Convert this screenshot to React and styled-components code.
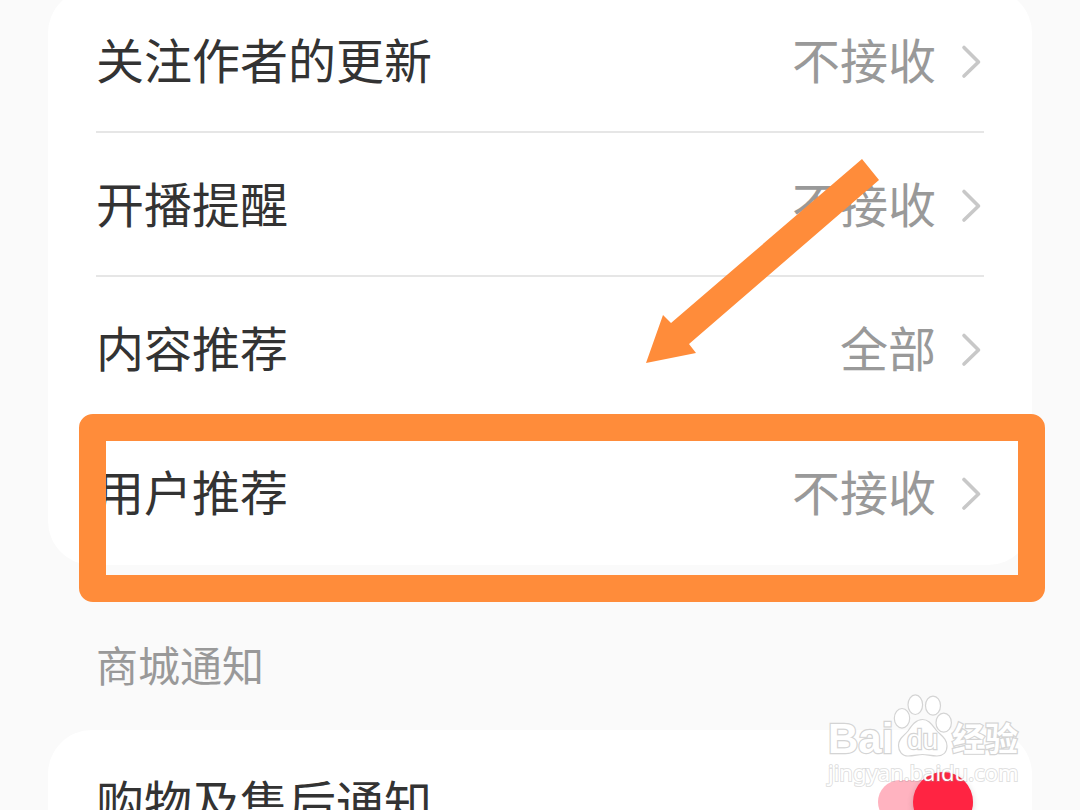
import React, {useState} from 'react';
import styled, {createGlobalStyle} from 'styled-components';

const MARK_COLOR = '#ff8c3a';
const FONT = "'Noto Sans CJK SC', sans-serif";

const GlobalStyle = createGlobalStyle`
	* {
		box-sizing: border-box;
	}
	body {
		margin: 0;
		background: #fafafa;
		font-family: ${FONT};
	}
`;

const Page = styled.main`
	position: relative;
	height: 100vh;
	overflow: hidden;
	padding: 0 48px;
	background: #fafafa;
`;

const Card = styled.section`
	margin-top: ${(props) => (props.$scrolled ? '-11px' : '0')};
	padding: 0 48px;
	border-radius: 44px;
	background: #ffffff;
`;

const Row = styled.div`
	position: relative;
	height: 144px;
	border-bottom: 2px solid ${(props) => (props.$last ? 'transparent' : '#e6e6e6')};
`;

const RowButton = styled.button`
	display: flex;
	align-items: center;
	width: 100%;
	height: 100%;
	padding: 0 0 4px;
	border: 0;
	background: none;
	font-family: inherit;
	font-size: 48px;
	line-height: 72px;
	text-align: left;
	cursor: pointer;
`;

const RowLabel = styled.label`
	display: flex;
	align-items: center;
	justify-content: space-between;
	height: 100%;
	padding: 0 11px 2px 0;
	font-size: 48px;
	line-height: 72px;
	color: #333333;
`;

const Title = styled.span`
	flex: 1;
	color: #333333;
`;

const Value = styled.span`
	color: #999999;
`;

const Chevron = styled.svg`
	width: 48px;
	height: 48px;
	fill: none;
	stroke: #c8c8c8;
	stroke-width: 3.6;
	stroke-linecap: round;
	stroke-linejoin: round;
`;

const SectionTitle = styled.h2`
	margin: 0;
	padding: 67px 48px 34px;
	font-size: 42px;
	font-weight: 400;
	line-height: 64px;
	color: #999999;
`;

const Switch = styled.input`
	appearance: none;
	display: flex;
	align-items: center;
	width: 95px;
	height: 44px;
	margin: 4px 0 0;
	border-radius: 22px;
	background: ${(props) => (props.checked ? '#ffb3c0' : '#dddddd')};
	cursor: pointer;

	&::before {
		content: '';
		flex: none;
		width: 60px;
		height: 60px;
		margin-left: ${(props) => (props.checked ? '35px' : '0')};
		border-radius: 50%;
		background: ${(props) => (props.checked ? '#ff2442' : '#ffffff')};
		box-shadow: 0 2px 6px rgba(0, 0, 0, 0.16);
	}
`;

const Highlight = styled.div`
	position: absolute;
	top: -7px;
	right: -61px;
	left: -17px;
	height: 188px;
	border: 27px solid ${MARK_COLOR};
	border-radius: 14px;
	pointer-events: none;
`;

const Arrow = styled.svg`
	position: absolute;
	top: 150px;
	right: 200px;
	width: 240px;
	height: 220px;
	fill: ${MARK_COLOR};
	pointer-events: none;
`;

const Watermark = styled.div`
	position: absolute;
	right: 58px;
	bottom: 28px;
	width: 194px;
	color: #ffffff;
	pointer-events: none;
`;

const Logo = styled.svg`
	display: block;
	width: 194px;
	height: 68px;
	fill: #ffffff;
	stroke: #d4d4d4;
	stroke-width: 1.2;
	overflow: visible;

	text {
		stroke-width: 2.4;
		paint-order: stroke;
	}
`;

const SiteName = styled.div`
	font-family: 'Noto Sans', sans-serif;
	font-size: 22px;
	line-height: 20px;
	white-space: nowrap;
	-webkit-text-stroke: 2px rgba(150, 150, 150, 0.3);
	paint-order: stroke;
`;

const items = [
	{id: 'author', title: '关注作者的更新', value: '不接收'},
	{id: 'live', title: '开播提醒', value: '不接收'},
	{id: 'content', title: '内容推荐', value: '全部'},
	{id: 'user', title: '用户推荐', value: '不接收', marked: true},
];

const App = () => {
	const [shopping, setShopping] = useState(true);

	return (
		<Page lang='zh-CN'>
			<GlobalStyle />
			<Card $scrolled>
				{items.map((item, i) => (
					<Row key={item.id} $last={i >= items.length - 2}>
						<RowButton type='button'>
							<Title>{item.title}</Title>
							<Value>{item.value}</Value>
							<Chevron viewBox='0 0 48 48' aria-hidden='true'>
								<path d='M28 13.5L42.5 28L28 42' />
							</Chevron>
						</RowButton>
						{item.marked && <Highlight />}
					</Row>
				))}
			</Card>
			<SectionTitle>商城通知</SectionTitle>
			<Card>
				<Row $last>
					<RowLabel htmlFor='shopping'>
						购物及售后通知
						<Switch
							id='shopping'
							type='checkbox'
							role='switch'
							checked={shopping}
							onChange={(e) => setShopping(e.target.checked)}
						/>
					</RowLabel>
				</Row>
			</Card>
			<Arrow viewBox='0 0 240 220' aria-hidden='true'>
				<path d='M222 9L239 30L49 194L56 203L6 213L23 165L31 173Z' />
			</Arrow>
			<Watermark>
				<Logo viewBox='0 0 194 68' aria-hidden='true'>
					<text
						x='0'
						y='59'
						fontFamily='Liberation Sans'
						fontWeight='700'
						fontSize='42'
					>
						Bai
					</text>
					<ellipse cx='74' cy='24.3' rx='7.7' ry='9.8' />
					<ellipse cx='87.3' cy='10.7' rx='7.3' ry='9.8' />
					<ellipse cx='105' cy='11.7' rx='7.5' ry='9.5' />
					<ellipse cx='115.7' cy='28.7' rx='7.7' ry='9.5' />
					<path d='M94.5 25.5C101 25.5 104 31 108 36C112 41 119 44 119 52C119 58.500 115 62 109 62C103 62 99 60.500 94.500 60.500C90 60.500 86 62 80 62C74 62 70.500 57 70.500 51.500C70.500 44 76 42 80 37C84 31 88 25.500 94.500 25.500Z' />
					<text
						x='79'
						y='55'
						fontFamily='Liberation Sans'
						fontSize='28'
					>
						du
					</text>
					<text
						x='124'
						y='57'
						fontFamily='Noto Sans CJK SC'
						fontWeight='700'
						fontSize='33'
					>
						经验
					</text>
				</Logo>
				<SiteName>jingyan.baidu.com</SiteName>
			</Watermark>
		</Page>
	);
};

export default App;
